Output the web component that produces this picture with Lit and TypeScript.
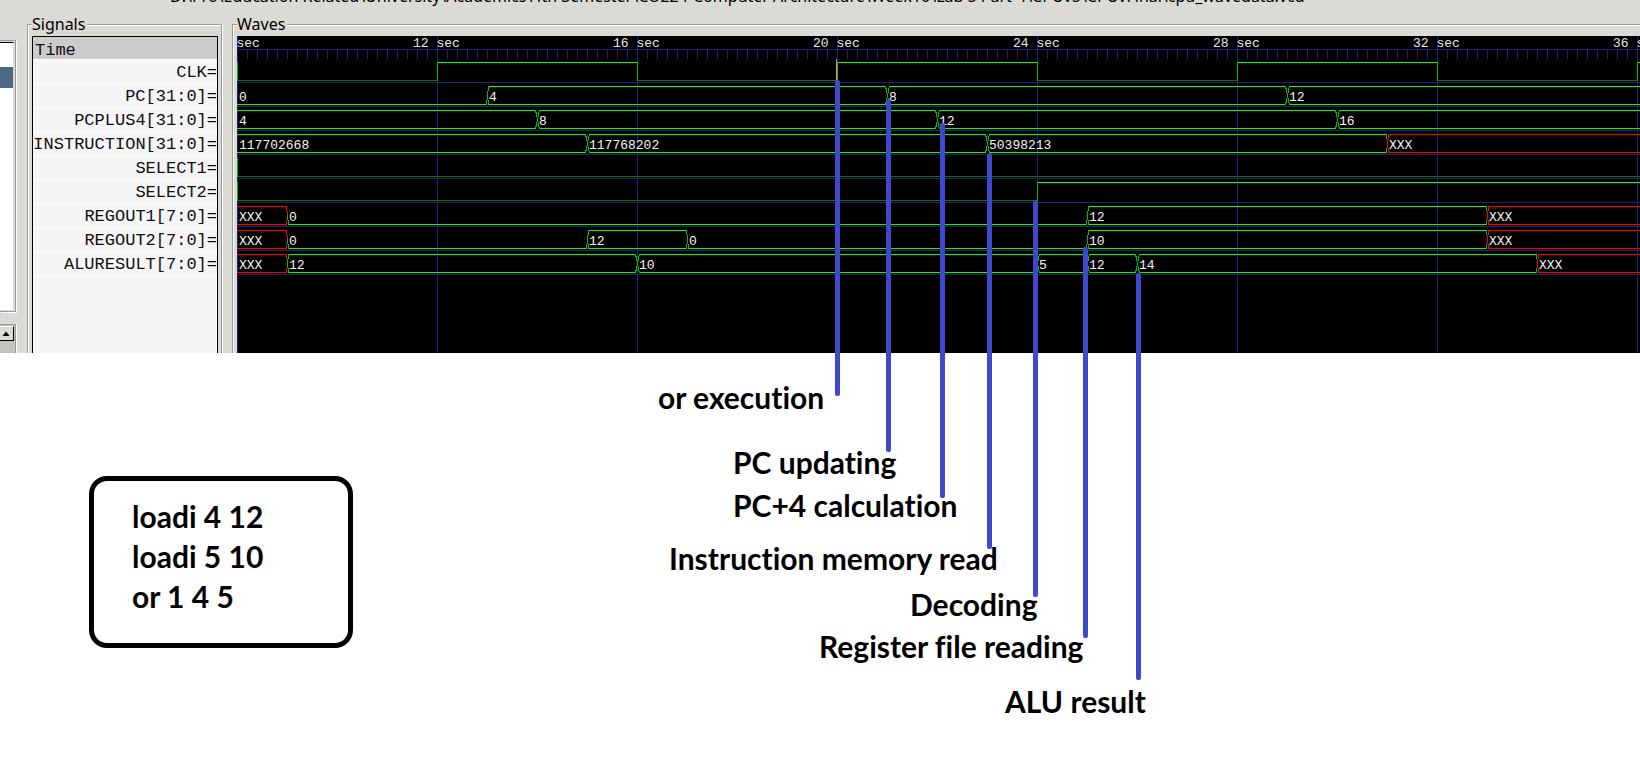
import { LitElement, html, svg, css } from "lit";
import { customElement, property } from "lit/decorators.js";

type Change = [number, string];
interface Signal {
  name: string;
  kind: "bit" | "bus";
  changes: Change[];
}

const START = 8;
const PX_PER_SEC = 50;
const HIGH = 3;
const LOW = 21;
const END = 4000;

const SIGNALS: Signal[] = [
  { name: "CLK", kind: "bit", changes: [[8, "0"], [12, "1"], [16, "0"], [20, "1"], [24, "0"], [28, "1"], [32, "0"], [36, "1"]] },
  { name: "PC[31:0]", kind: "bus", changes: [[8, "0"], [13, "4"], [21, "8"], [29, "12"]] },
  { name: "PCPLUS4[31:0]", kind: "bus", changes: [[8, "4"], [14, "8"], [22, "12"], [30, "16"]] },
  { name: "INSTRUCTION[31:0]", kind: "bus", changes: [[8, "117702668"], [15, "117768202"], [23, "50398213"], [31, "XXX"]] },
  { name: "SELECT1", kind: "bit", changes: [[8, "0"]] },
  { name: "SELECT2", kind: "bit", changes: [[8, "0"], [24, "1"]] },
  { name: "REGOUT1[7:0]", kind: "bus", changes: [[8, "XXX"], [9, "0"], [25, "12"], [33, "XXX"]] },
  { name: "REGOUT2[7:0]", kind: "bus", changes: [[8, "XXX"], [9, "0"], [15, "12"], [17, "0"], [25, "10"], [33, "XXX"]] },
  { name: "ALURESULT[7:0]", kind: "bus", changes: [[8, "XXX"], [9, "12"], [16, "10"], [24, "5"], [25, "12"], [26, "14"], [34, "XXX"]] },
];

const LEADERS = [
  { x: 835, top: 80, bottom: 396 },
  { x: 886, top: 99, bottom: 452 },
  { x: 940, top: 123, bottom: 498 },
  { x: 987, top: 153, bottom: 549 },
  { x: 1033, top: 201, bottom: 597 },
  { x: 1083, top: 247, bottom: 638 },
  { x: 1136, top: 273, bottom: 680 },
];

const NOTES = [
  { text: "or execution", x: 658, y: 379 },
  { text: "PC updating", x: 733, y: 444 },
  { text: "PC+4 calculation", x: 733, y: 487 },
  { text: "Instruction memory read", x: 669, y: 540 },
  { text: "Decoding", x: 910, y: 586 },
  { text: "Register file reading", x: 819, y: 628 },
  { text: "ALU result", x: 1005, y: 683 },
];

const xAt = (t: number) => (t - START) * PX_PER_SEC;

@customElement("wave-ruler")
export class WaveRuler extends LitElement {
  static styles = css`
    :host { display: block; height: 23px; overflow: hidden; }
    .ruler { display: block; width: 100%; height: 23px; shape-rendering: crispEdges; }
    .line { fill: #20207c; }
    .stamp { fill: #e8e8e8; font: 13px "Liberation Mono", monospace; white-space: pre; }
  `;

  render() {
    const ticks = Array.from({ length: 400 }, (_, i) => i * 10).filter((x) => x % 200);
    const stamps = Array.from({ length: 8 }, (_, i) => START + i * 4);
    return html`<svg class="ruler">
      <rect class="line" x="0" y="13" width="100%" height="1"></rect>
      ${ticks.map((x) => svg`<rect class="line" x=${x} y="14" width="1" height="9"></rect>`)}
      ${stamps.map((t) => svg`<text class="stamp" x=${xAt(t) - 24} y="11">${String(t).padStart(2)} sec</text>`)}
    </svg>`;
  }
}

@customElement("wave-trace")
export class WaveTrace extends LitElement {
  @property({ attribute: false }) signal!: Signal;

  static styles = css`
    :host { display: block; height: 24px; overflow: hidden; }
    .trace { display: block; width: 100%; height: 24px; shape-rendering: crispEdges; }
    .base { fill: #20207c; }
    .rail { fill: #00ff00; }
    .low { fill: #008000; }
    .edge { fill: #00c000; }
    .bad { fill: #ff0000; }
    .leg { stroke: #00c000; fill: none; }
    .badleg { stroke: #ff0000; fill: none; }
    .value { fill: #f4f4f4; font: 13px "Liberation Mono", monospace; }
  `;

  private bit(changes: Change[]) {
    return changes.map(([t, v], i) => {
      const x = xAt(t);
      const end = i + 1 < changes.length ? xAt(changes[i + 1][0]) : END;
      return svg`
        <rect class=${v === "1" ? "rail" : "low"} x=${x} y=${v === "1" ? HIGH : LOW} width=${end - x} height="1"></rect>
        <rect class="edge" x=${x} y=${HIGH} width="1" height=${LOW - HIGH + 1}></rect>`;
    });
  }

  private bus(changes: Change[]) {
    const thin = (v: string) => v === "0" || v === "XXX";
    const gap = (i: number) =>
      i <= 0 || i >= changes.length ? 0 : thin(changes[i][1]) || thin(changes[i - 1][1]) ? 1 : 2;
    const mid = (HIGH + LOW + 1) / 2;
    return changes.map(([t, v], i) => {
      const x = xAt(t);
      const last = i + 1 >= changes.length;
      const from = x + gap(i);
      const to = last ? END : xAt(changes[i + 1][0]) - gap(i + 1);
      const bad = v === "XXX";
      const rail = bad ? "bad" : "rail";
      const leg = bad ? "badleg" : "leg";
      const c = x + 0.5;
      const n = last ? 0 : xAt(changes[i + 1][0]) + 0.5;
      const top = v !== "0";
      return svg`
        ${top ? svg`<rect class=${rail} x=${from} y=${HIGH} width=${to - from} height="1"></rect>` : ""}
        <rect class=${rail} x=${from} y=${LOW} width=${to - from} height="1"></rect>
        ${i > 0 ? svg`<path class=${leg} d="M${c + gap(i)} ${LOW + 1}L${c} ${mid}${top ? `L${c + gap(i)} ${HIGH}` : ""}"></path>` : ""}
        ${!last ? svg`<path class=${leg} d="M${n - gap(i + 1)} ${LOW + 1}L${n} ${mid}${top ? `L${n - gap(i + 1)} ${HIGH}` : ""}"></path>` : ""}
        <text class="value" x=${x + 2} y="18">${v}</text>`;
    });
  }

  render() {
    const { kind, changes } = this.signal;
    return html`<svg class="trace">
      <rect class="base" x="0" y="23" width="100%" height="1"></rect>
      ${kind === "bit" ? this.bit(changes) : this.bus(changes)}
    </svg>`;
  }
}

@customElement("app-root")
export class AppRoot extends LitElement {
  static styles = css`
    :host {
      display: block;
      position: relative;
      overflow: hidden;
      min-height: 100vh;
      background: #ffffff;
      color: #000000;
      font-family: "Noto Sans", sans-serif;
    }
    .viewer { background: #dcdad5; }
    .path {
      height: 12px;
      padding-left: 170px;
      overflow: hidden;
      white-space: nowrap;
      font: 16px/20px "Noto Sans", sans-serif;
    }
    .file { display: block; margin-top: -14px; }
    .panes { display: flex; align-items: stretch; }
    .tree { flex: none; width: 17px; margin-right: 10px; padding-top: 28px; display: flex; flex-direction: column; }
    .list {
      height: 268px;
      border: solid #9c9a94;
      border-width: 1px 1px 1px 0;
      box-shadow: 1px 1px 0 #ffffff;
      margin-right: 1px;
      padding: 1px 1px 1px 0;
    }
    .items {
      box-sizing: border-box;
      height: 100%;
      border-top: 1px solid #000000;
      border-right: 1px solid #dcdad5;
      background: #ffffff;
      padding-top: 24px;
    }
    .picked { height: 21px; background: #4b6983; }
    .scroll {
      flex: 1;
      margin: 12px 1px 0 0;
      border: solid #9c9a94;
      border-width: 1px 1px 0 0;
      box-shadow: 1px 0 0 #ffffff;
      background: #c4c2bd;
      padding-top: 1px;
    }
    .up {
      display: block;
      width: 14px;
      height: 15px;
      padding: 0;
      border: solid;
      border-width: 1px 1px 1px 0;
      border-color: #ffffff #000000 #000000;
      background: #dcdad5;
    }
    .arrow { display: block; margin: 0 0 0 2px; }
    .frame {
      display: flex;
      flex-direction: column;
      margin-top: 12px;
      border: 1px solid #9c9a94;
      border-bottom: 0;
      box-shadow: 1px 0 0 #ffffff, inset 1px 1px 0 #ffffff;
    }
    .signals { flex: none; width: 193px; }
    .waves { flex: 1; min-width: 0; margin-left: 10px; border-right: 0; }
    .caption {
      width: fit-content;
      margin: -12px 0 0 4px;
      padding-right: 2px;
      background: #dcdad5;
      font: 16px/22px "Noto Sans", sans-serif;
    }
    .names {
      flex: 1;
      margin: 1px 3px 0 4px;
      border: 1px solid #000000;
      border-bottom: 0;
      background: #f5f5f5;
      color: #101010;
      font: 17px/20px "Liberation Mono", monospace;
    }
    .time { height: 22px; padding: 2px 0 0 2px; box-sizing: border-box; line-height: 24px; background: #cccccc; }
    .name {
      height: 24px;
      box-sizing: border-box;
      padding-top: 3px;
      border-bottom: 1px solid #ffffff;
      display: flex;
      justify-content: flex-end;
      white-space: pre;
    }
    .rows { border-top: 1px solid #ffffff; margin: 0; padding: 0; list-style: none; }
    .screen {
      flex: 1;
      margin: 1px 0 0 4px;
      padding-bottom: 78px;
      background: repeating-linear-gradient(to right, #20207c 0 1px, #000000 1px 200px);
    }
    .code {
      box-sizing: border-box;
      width: 264px;
      margin: 123px 0 0 89px;
      padding: 15px 38px 27px;
      border: 5px solid #000000;
      border-radius: 18px;
    }
    .line { margin: 0; line-height: 40px; }
    .leader { position: absolute; width: 5px; border-radius: 2px; background: #3f48cc; }
    .cursor { position: absolute; left: 836px; top: 59px; width: 1px; height: 22px; background: #ff8080; }
    .note { position: absolute; margin: 0; white-space: nowrap; line-height: 36px; }
    .line, .note {
      font-family: Lato, sans-serif;
      font-size: 30px;
      font-weight: bold;
      font-variant-ligatures: none;
    }
  `;

  render() {
    return html`
      <main class="viewer">
        <header class="path">
          <span class="file">D:\\Pro\\Education Related\\University\\Academics\\4th Semester\\CO224-Computer Architecture\\Week10\\Lab 5 Part-4\\CPUv5\\CPUvFinal\\cpu_wavedata.vcd</span>
        </header>
        <div class="panes">
          <div class="tree">
            <div class="list"><div class="items"><div class="picked"></div></div></div>
            <div class="scroll">
              <button class="up" aria-label="Scroll up">
                <svg class="arrow" width="8" height="5" viewBox="0 0 8 5"><path d="M0.500 5L4 0.500L7.500 5Z" /></svg>
              </button>
            </div>
          </div>
          <section class="frame signals">
            <h2 class="caption">Signals</h2>
            <div class="names">
              <div class="time">Time</div>
              <ul class="rows">
                ${SIGNALS.map((s) => html`<li class="name">${s.name}=</li>`)}
              </ul>
            </div>
          </section>
          <section class="frame waves">
            <h2 class="caption">Waves</h2>
            <div class="screen">
              <wave-ruler></wave-ruler>
              ${SIGNALS.map((s) => html`<wave-trace .signal=${s}></wave-trace>`)}
            </div>
          </section>
        </div>
      </main>
      <section class="code">
        <p class="line">loadi 4 12</p>
        <p class="line">loadi 5 10</p>
        <p class="line">or 1 4 5</p>
      </section>
      <div class="cursor"></div>
      ${LEADERS.map((l) => html`<div class="leader" style="left:${l.x}px;top:${l.top}px;height:${l.bottom - l.top}px"></div>`)}
      ${NOTES.map((n) => html`<p class="note" style="left:${n.x}px;top:${n.y}px">${n.text}</p>`)}
    `;
  }
}
